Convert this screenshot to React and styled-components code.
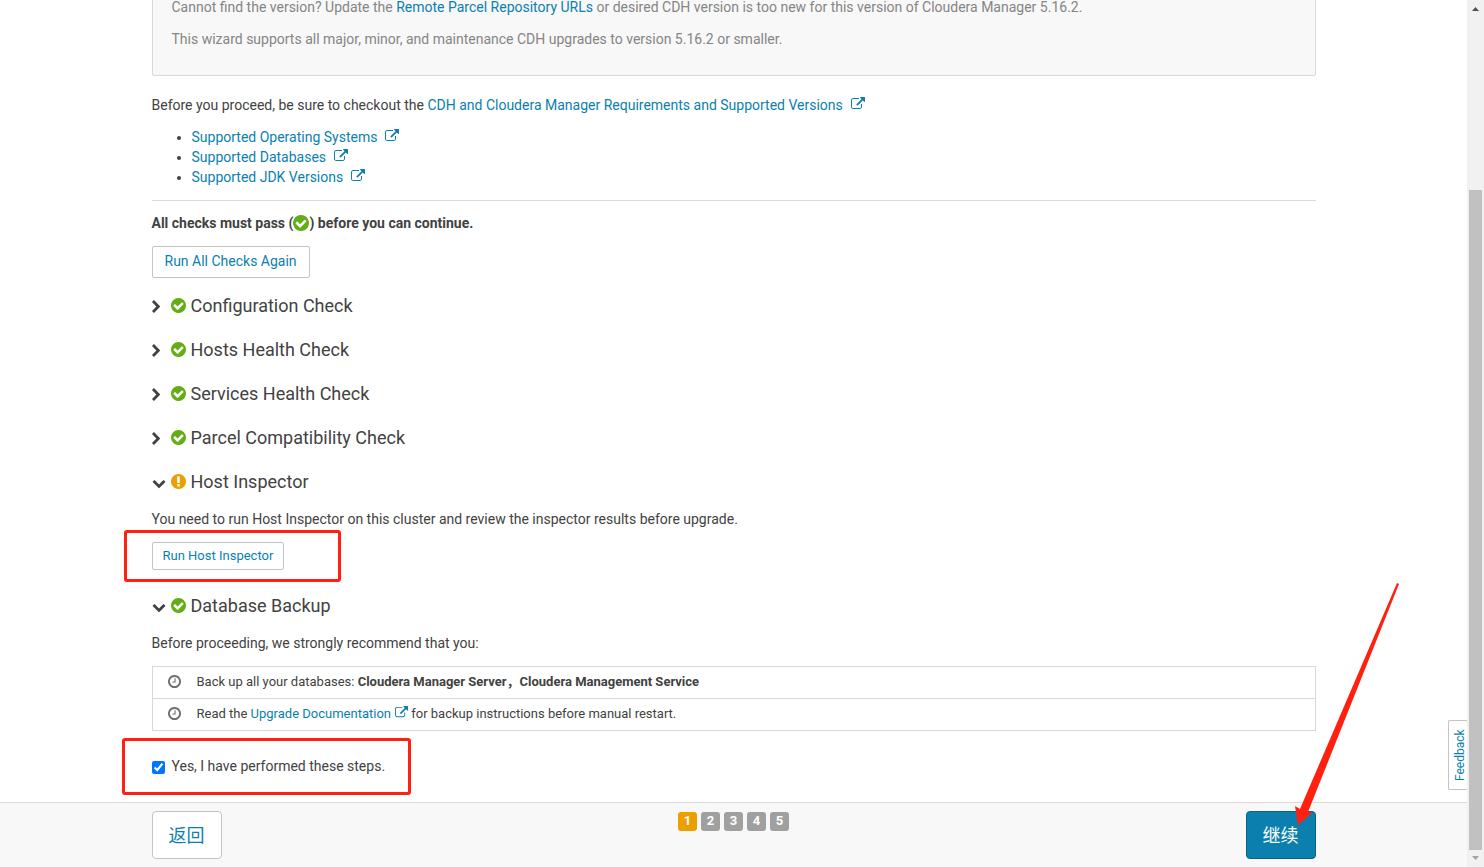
import React, { useState } from 'react';
import styled, { createGlobalStyle } from 'styled-components';

const GlobalStyle = createGlobalStyle`
  * { box-sizing: border-box; }

  body {
    margin: 0;
    background: #fff;
    color: #424242;
    font: 14px/20px Roboto, "Noto Sans CJK SC", sans-serif;
  }

  p, ul, h3 { margin: 0; padding: 0; }

  button { font-family: inherit; cursor: pointer; }
`;

const Window = styled.div`
  display: flex;
  height: 100vh;
  overflow: hidden;
`;

const Page = styled.div`
  position: relative;
  flex: 1;
  min-width: 0;
  display: flex;
  flex-direction: column;
`;

// scrolled to the end, so the content sits on the bottom edge
const ScrollArea = styled.div`
  flex: 1;
  min-height: 0;
  display: flex;
  flex-direction: column;
  justify-content: flex-end;
  overflow: hidden;
`;

const Content = styled.main`
  flex-shrink: 0;
  width: 100%;
  max-width: 1164px;
  margin: 0 auto;
  padding-bottom: 26px;
`;

const Panel = styled.section`
  margin-bottom: 19px;
  padding: 14px 19px;
  border: 1px solid #d9d9d9;
  border-radius: 2px;
  background: #f8f8f8;
  color: #858585;
`;

const Text = styled.p`
  margin-bottom: 12px;
`;

// text that stands right above a box or a button
const Intro = styled(Text)`
  margin-bottom: 13px;
  font-weight: ${({ $bold }) => ($bold ? 700 : 400)};
`;

const Link = styled.a`
  color: #0b7fad;
  text-decoration: none;
`;

const LinkList = styled.ul`
  margin-bottom: 13px;
  padding-left: 40px;
`;

const Divider = styled.hr`
  margin: 0 0 12px;
  border: 0;
  border-top: 1px solid #d9d9d9;
`;

const Svg = styled.svg`
  display: inline-block;
  flex-shrink: 0;
  fill: currentColor;
  width: ${({ $size }) => $size}px;
  height: ${({ $size }) => $size}px;
  color: ${({ $color }) => $color || 'inherit'};
  vertical-align: ${({ $align }) => $align || '-2px'};
  margin-left: ${({ $left }) => $left || 0}px;
`;

const Button = styled.button`
  display: block;
  height: ${({ $small }) => ($small ? 28 : 32)}px;
  padding: 0 ${({ $small }) => ($small ? 10 : 12)}px 2px;
  border: 1px solid #c4c4c4;
  border-radius: 2px;
  background: #fff;
  color: #0b7fad;
  font-size: ${({ $small }) => ($small ? 13 : 14)}px;
`;

const Checks = styled.div`
  margin-top: 18px;
`;

const CheckTitle = styled.h3`
  margin-bottom: ${({ $open }) => ($open ? 17 : 24)}px;
  font-size: 18px;
  font-weight: 400;
  line-height: 20px;
`;

const Toggle = styled.button`
  display: flex;
  align-items: center;
  padding: 0;
  border: 0;
  background: none;
  color: inherit;
  font-size: inherit;
  line-height: inherit;
`;

const Chevron = styled.span`
  display: flex;
  width: 19px;
  padding-top: 2px;
`;

const Status = styled.span`
  display: flex;
  padding-bottom: 2px;
`;

const Label = styled.span`
  margin-left: 5px;
`;

const CheckBody = styled.div`
  margin-bottom: ${({ $last }) => ($last ? 0 : 26)}px;
`;

const Marked = styled.div`
  position: relative;
`;

const Mark = styled.span`
  position: absolute;
  top: ${({ $top }) => $top}px;
  left: ${({ $left }) => $left}px;
  width: ${({ $width }) => $width}px;
  height: ${({ $height }) => $height}px;
  border: 3px solid #ff2010;
  border-radius: 3px;
  pointer-events: none;
`;

const Steps = styled.ul`
  margin-bottom: 25px;
  border: 1px solid #d9d9d9;
  font-size: 13px;
  list-style: none;
`;

const Step = styled.li`
  display: flex;
  align-items: center;
  height: ${({ $first }) => ($first ? 31 : 32)}px;
  padding: 0 15px 2px;
  border-top: ${({ $first }) => ($first ? 0 : 1)}px solid #d9d9d9;
`;

const StepText = styled.span`
  margin-left: 16px;
`;

const Confirm = styled.label`
  display: flex;
  align-items: center;
`;

const Checkbox = styled.input`
  width: 13px;
  height: 13px;
  margin: 2px 7px 0 0;
`;

const Footer = styled.footer`
  flex-shrink: 0;
  border-top: 1px solid #d9d9d9;
  background: #f8f8f8;
`;

const FooterInner = styled.div`
  display: grid;
  grid-template-columns: 1fr auto 1fr;
  align-items: start;
  width: 100%;
  max-width: 1164px;
  margin: 0 auto;
  padding: 8px 0;
`;

const WizardButton = styled.button`
  width: 70px;
  height: 48px;
  padding: 0 0 2px;
  border: 1px solid ${({ $primary }) => ($primary ? '#096489' : '#c4c4c4')};
  border-radius: 4px;
  background: ${({ $primary }) => ($primary ? '#0b7fad' : '#fff')};
  color: ${({ $primary }) => ($primary ? '#fff' : '#0b7fad')};
  font-size: 18px;
`;

const Next = styled.div`
  position: relative;
  justify-self: end;
`;

const Arrow = styled.svg`
  position: absolute;
  right: -84px;
  bottom: 34px;
  width: 106px;
  height: 244px;
  fill: #ff2010;
  pointer-events: none;
`;

const Pager = styled.ol`
  display: flex;
  gap: 4px;
  margin: 1px 0 0;
  padding: 0;
  list-style: none;
`;

const PageNumber = styled.li`
  width: 19px;
  height: 19px;
  border-radius: 3px;
  background: ${({ $active }) => ($active ? '#ec9f00' : '#a0a0a0')};
  color: #fff;
  font-size: 13px;
  font-weight: 700;
  line-height: 18px;
  text-align: center;
`;

const Feedback = styled.button`
  position: absolute;
  right: 0;
  bottom: 77px;
  width: 19px;
  height: 70px;
  padding: 0 4px 0 0;
  border: 1px solid #c4c4c4;
  border-left: 0;
  border-radius: 0 2px 2px 0;
  background: #fff;
  color: #0b7fad;
  font-size: 12px;
  line-height: 14px;
  writing-mode: vertical-rl;
  transform: rotate(180deg);
`;

const Scrollbar = styled.div`
  display: flex;
  flex-direction: column;
  align-items: center;
  width: 17px;
  background: #f1f1f1;
`;

const ScrollArrow = styled.svg`
  flex-shrink: 0;
  width: 17px;
  height: 17px;
  fill: ${({ $dim }) => ($dim ? '#a3a3a3' : '#505050')};
`;

const Track = styled.div`
  flex: 1;
  display: flex;
  flex-direction: column;
  justify-content: flex-end;
`;

const Thumb = styled.div`
  width: 13px;
  height: 79.2%;
  background: #c1c1c1;
`;

const paths = {
  check: 'M1412 734q0-28-18-46l-91-90q-19-19-45-19t-45 19l-408 407-226-226q-19-19-45-19t-45 19l-91 90q-18 18-18 46 0 27 18 45l362 362q19 19 45 19 27 0 46-19l543-543q18-18 18-45zm252 162q0 209-103 385.5t-279.5 279.5-385.5 103-385.5-103-279.5-279.5-103-385.5 103-385.5 279.5-279.5 385.5-103 385.5 103 279.5 279.5 103 385.5z',
  warning: 'M896 128q209 0 385.5 103t279.5 279.5 103 385.5-103 385.5-279.5 279.5-385.5 103-385.5-103-279.5-279.5-103-385.5 103-385.5 279.5-279.5 385.5-103zm128 1247v-190q0-14-9-23.5t-22-9.5h-192q-13 0-23 10t-10 23v190q0 13 10 23t23 10h192q13 0 22-9.5t9-23.5zm-2-344l18-621q0-12-10-18-10-8-24-8h-220q-14 0-24 8-10 6-10 18l17 621q0 10 10 17.5t24 7.5h185q14 0 23.5-7.5t10.5-17.5z',
  clock: 'M1024 544v448q0 14-9 23t-23 9h-320q-14 0-23-9t-9-23v-64q0-14 9-23t23-9h224v-352q0-14 9-23t23-9h64q14 0 23 9t9 23zm416 352q0-148-73-273t-198-198-273-73-273 73-198 198-73 273 73 273 198 198 273 73 273-73 198-198 73-273zm224 0q0 209-103 385.5t-279.5 279.5-385.5 103-385.5-103-279.5-279.5-103-385.5 103-385.5 279.5-279.5 385.5-103 385.5 103 279.5 279.5 103 385.5z',
  external: 'M1408 928v320q0 119-84.5 203.5t-203.5 84.5h-832q-119 0-203.5-84.5t-84.5-203.5v-832q0-119 84.5-203.5t203.5-84.5h704q14 0 23 9t9 23v64q0 14-9 23t-23 9h-704q-66 0-113 47t-47 113v832q0 66 47 113t113 47h832q66 0 113-47t47-113v-320q0-14 9-23t23-9h64q14 0 23 9t9 23zm384-864v512q0 26-19 45t-45 19-45-19l-176-176-652 652q-10 10-23 10t-23-10l-114-114q-10-10-10-23t10-23l652-652-176-176q-19-19-19-45t19-45 45-19h512q26 0 45 19t19 45z',
  right: 'M1027 877l-742 742q-19 19-45 19t-45-19l-166-166q-19-19-19-45t19-45l531-531-531-531q-19-19-19-45t19-45l166-166q19-19 45-19t45 19l742 742q19 19 19 45t-19 45z',
  down: 'M1683 808l-742 741q-19 19-45 19t-45-19l-742-741q-19-19-19-45.5t19-45.5l166-165q19-19 45-19t45 19l531 531 531-531q19-19 45-19t45 19l166 165q19 19 19 45.5t-19 45.5z',
};

// round icons fill their box, the others keep the whole glyph grid
const Icon = ({ name, size, color, align, left }) => (
  <Svg
    viewBox={['check', 'warning', 'clock'].includes(name) ? '128 128 1536 1536' : '0 0 1792 1792'}
    $size={size}
    $color={color}
    $align={align}
    $left={left}
    aria-hidden="true"
  >
    <path d={paths[name]} />
  </Svg>
);

const ExternalLink = ({ children, left = 8, size = 14 }) => (
  <Link href="#">
    {children}
    <Icon name="external" size={size} left={left} align="-1px" />
  </Link>
);

const Check = ({ title, warning, last, defaultOpen = false, children }) => {
  const [open, setOpen] = useState(defaultOpen);

  return (
    <>
      <CheckTitle $open={open}>
        <Toggle type="button" aria-expanded={open} onClick={() => setOpen(!open)}>
          <Chevron><Icon name={open ? 'down' : 'right'} size={14} /></Chevron>
          <Status>
            <Icon name={warning ? 'warning' : 'check'} size={15} color={warning ? '#ec9f00' : '#64ad15'} />
          </Status>
          <Label>{title}</Label>
        </Toggle>
      </CheckTitle>
      {open && children && <CheckBody $last={last}>{children}</CheckBody>}
    </>
  );
};

const App = () => {
  const [done, setDone] = useState(true);

  return (
    <Window>
      <GlobalStyle />
      <Page>
        <ScrollArea>
          <Content>
            <Panel>
              <Text>
                Cannot find the version? Update the <Link href="#">Remote Parcel Repository URLs</Link> or desired CDH version is too new for this version of Cloudera Manager 5.16.2.
              </Text>
              <Text>This wizard supports all major, minor, and maintenance CDH upgrades to version 5.16.2 or smaller.</Text>
            </Panel>

            <Text>
              Before you proceed, be sure to checkout the <ExternalLink>CDH and Cloudera Manager Requirements and Supported Versions</ExternalLink>
            </Text>
            <LinkList>
              {['Supported Operating Systems', 'Supported Databases', 'Supported JDK Versions'].map(name => (
                <li key={name}><ExternalLink>{name}</ExternalLink></li>
              ))}
            </LinkList>
            <Divider />

            <Intro $bold>
              All checks must pass (<Icon name="check" size={16} color="#64ad15" align="-3px" />) before you can continue.
            </Intro>
            <Button type="button">Run All Checks Again</Button>

            <Checks>
              <Check title="Configuration Check" />
              <Check title="Hosts Health Check" />
              <Check title="Services Health Check" />
              <Check title="Parcel Compatibility Check" />
              <Check title="Host Inspector" warning defaultOpen>
                <Intro>You need to run Host Inspector on this cluster and review the inspector results before upgrade.</Intro>
                <Marked>
                  <Button type="button" $small>Run Host Inspector</Button>
                  <Mark $top={-12} $left={-28} $width={217} $height={52} />
                </Marked>
              </Check>
              <Check title="Database Backup" defaultOpen last>
                <Intro>Before proceeding, we strongly recommend that you:</Intro>
                <Steps>
                  <Step $first>
                    <Icon name="clock" size={13} color="#6e6e6e" />
                    <StepText>Back up all your databases: <b>Cloudera Manager Server，Cloudera Management Service</b></StepText>
                  </Step>
                  <Step>
                    <Icon name="clock" size={13} color="#6e6e6e" />
                    <StepText>
                      Read the <ExternalLink left={4} size={13}>Upgrade Documentation</ExternalLink> for backup instructions before manual restart.
                    </StepText>
                  </Step>
                </Steps>
                <Marked>
                  <Confirm>
                    <Checkbox type="checkbox" checked={done} onChange={e => setDone(e.target.checked)} />
                    Yes, I have performed these steps.
                  </Confirm>
                  <Mark $top={-18} $left={-30} $width={289} $height={57} />
                </Marked>
              </Check>
            </Checks>
          </Content>
        </ScrollArea>

        <Footer>
          <FooterInner>
            <WizardButton type="button">返回</WizardButton>
            <Pager>
              {[1, 2, 3, 4, 5].map(n => <PageNumber key={n} $active={n === 1}>{n}</PageNumber>)}
            </Pager>
            <Next>
              <WizardButton type="button" $primary>继续</WizardButton>
              <Arrow viewBox="0 0 106 244" aria-hidden="true">
                <path d="M103 2L105 3L14 231L18 232L4 244L1 225L6 228Z" />
              </Arrow>
            </Next>
          </FooterInner>
        </Footer>
        <Feedback type="button">Feedback</Feedback>
      </Page>

      <Scrollbar aria-hidden="true">
        <ScrollArrow viewBox="0 0 17 17"><path d="M5 11L8.5 7L12 11Z" /></ScrollArrow>
        <Track><Thumb /></Track>
        <ScrollArrow viewBox="0 0 17 17" $dim><path d="M5 6L8.5 10L12 6Z" /></ScrollArrow>
      </Scrollbar>
    </Window>
  );
};

export default App;
